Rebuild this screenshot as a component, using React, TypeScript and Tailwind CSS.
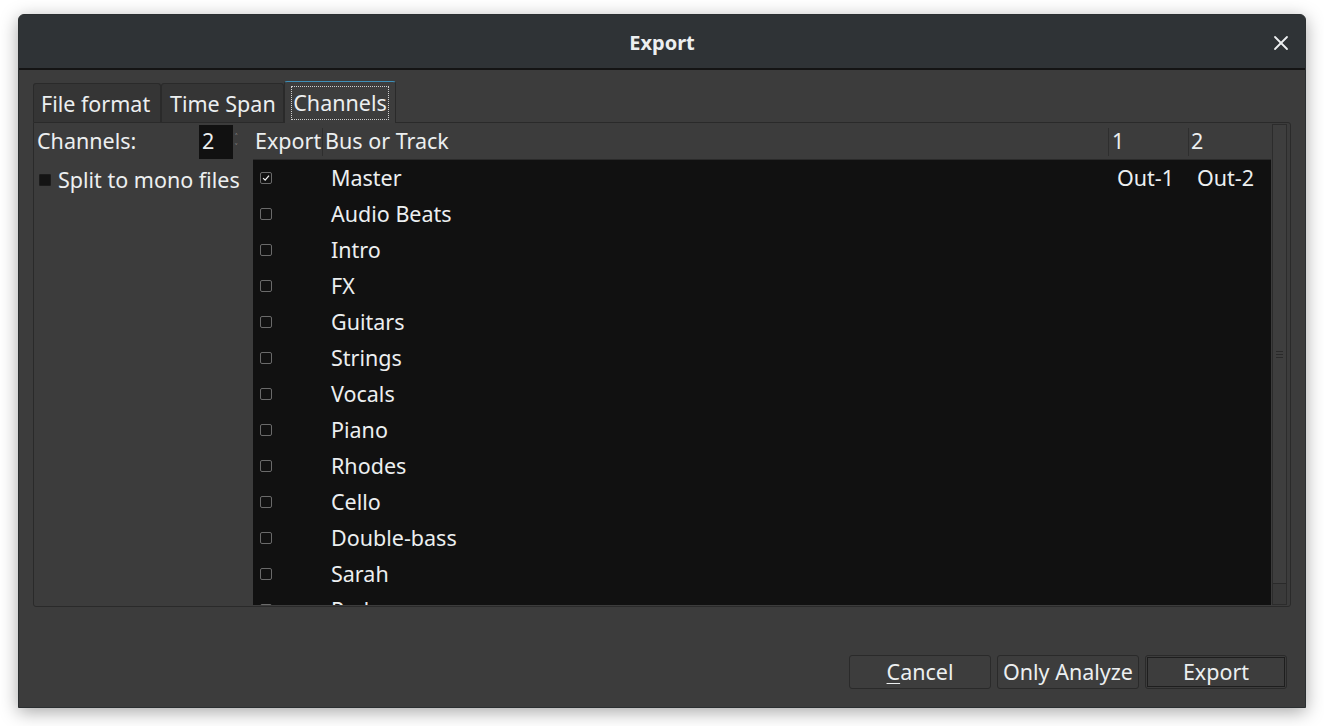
import { X } from "lucide-react";

const tracks = [
  "Master",
  "Audio Beats",
  "Intro",
  "FX",
  "Guitars",
  "Strings",
  "Vocals",
  "Piano",
  "Rhodes",
  "Cello",
  "Double-bass",
  "Sarah",
  "Pads",
];

function RowCheck({ checked }: { checked?: boolean }) {
  return (
    <span className="flex h-[12px] w-[12px] items-center justify-center rounded-[2px] border border-[#6a6a6a]">
      {checked && (
        <svg viewBox="0 0 12 12" className="h-[10px] w-[10px]">
          <path d="M2.5 6.2 L5 8.6 L9.6 3.2" fill="none" stroke="#f0f0f0" strokeWidth="1.5" />
        </svg>
      )}
    </span>
  );
}

export default function App() {
  return (
    <div
      className="h-[726px] w-[1324px] bg-white pl-[18px] pt-[14px] text-[#eceff0]"
      style={{ fontFamily: '"Noto Sans", "DejaVu Sans", sans-serif' }}
    >
      <div className="flex h-[694px] w-[1288px] flex-col overflow-hidden rounded-t-[6px] border border-[#2b2f31] bg-[#3c3c3c] shadow-[0_4px_18px_rgba(0,0,0,0.35)]">
        {/* title bar */}
        <div className="flex h-[55px] shrink-0 items-center border-b-2 border-[#141414] bg-[#2f3336] pt-[2px]">
          <div className="ml-[12px] w-[24px]" />
          <div className="flex-1 text-center text-[20px] font-bold">Export</div>
          <X className="mr-[12px] h-[24px] w-[24px]" strokeWidth={1.8} />
        </div>

        {/* body */}
        <div className="flex flex-1 flex-col px-[14px] pt-[12px]">
          {/* tabs */}
          <div className="flex h-[40px] items-end text-[21.5px]">
            <div className="flex h-[39px] w-[128px] items-center rounded-t-[3px] border border-b-0 border-[#2a2a2a] bg-[#353535] pl-[7px] pt-[3px]">
              File format
            </div>
            <div className="flex h-[39px] w-[123px] items-center rounded-t-[3px] border border-b-0 border-[#2a2a2a] bg-[#353535] pl-[8px] pt-[3px]">
              Time Span
            </div>
            <div className="relative z-10 -mb-px flex h-[42px] w-[112px] items-center justify-center rounded-t-[3px] border border-b-0 border-[#2a2a2a] border-t-[#3e8fb8] bg-[#3d3d3d]">
              <span className="flex h-[34px] items-center border border-dotted border-[#cfcfcf] px-px pt-[2px]">
                Channels
              </span>
            </div>
          </div>

          {/* tab panel */}
          <div className="flex h-[485px] rounded-[3px] rounded-tl-none border border-[#2a2a2a] bg-[#3c3c3c] py-px text-[21.5px]">
            {/* left options */}
            <div className="flex w-[219px] shrink-0 flex-col overflow-hidden">
              <div className="flex h-[34px] items-center pt-px">
                <span className="w-[165px] shrink-0 pl-[3px]">Channels:</span>
                <span className="flex h-[34px] w-[34px] shrink-0 items-center bg-[#111111] pl-[3px]">2</span>
                <span className="ml-[2px] flex flex-col text-[9px] leading-[10px] text-[#9a9a9a]">
                  <span>˄</span>
                  <span>˅</span>
                </span>
              </div>
              <div className="mt-[4px] flex h-[36px] items-center pl-[5px]">
                <span className="h-[12px] w-[12px] shrink-0 rounded-[1px] border border-[#1c1c1c] bg-[#141414]" />
                <span className="ml-[7px] whitespace-nowrap pt-px">Split to mono files</span>
              </div>
            </div>

            {/* table */}
            <div className="flex min-w-0 flex-1 flex-col overflow-hidden">
              <div className="flex h-[36px] shrink-0 items-center border-b border-[#2b2b2b] bg-[#3c3c3c]">
                <div className="flex h-[28px] w-[70px] items-center border-r border-[#2e2e2e] pl-[2px]">Export</div>
                <div className="flex h-[28px] flex-1 items-center border-r border-[#2e2e2e] pl-[2px]">Bus or Track</div>
                <div className="flex h-[28px] w-[80px] items-center border-r border-[#2e2e2e] pl-[3px]">1</div>
                <div className="flex h-[28px] w-[82px] items-center pl-[2px]">2</div>
              </div>
              <div className="flex-1 overflow-hidden bg-[#111111]">
                {tracks.map((t, i) => (
                  <div key={t} className="flex h-[36px] items-center">
                    <div className="flex w-[70px] items-center pl-[7px]">
                      <RowCheck checked={i === 0} />
                    </div>
                    <div className="flex-1 pl-[8px] pt-px">{t}</div>
                    <div className="w-[80px] pl-[8px] pt-px">{i === 0 ? "Out-1" : ""}</div>
                    <div className="w-[82px] pl-[8px] pt-px">{i === 0 ? "Out-2" : ""}</div>
                  </div>
                ))}
              </div>
            </div>

            {/* scrollbar */}
            <div className="ml-px mr-[3px] flex w-[15px] shrink-0 flex-col border border-[#2c2c2c] bg-[#3a3a3a]">
              <div className="flex flex-1 items-center justify-center border-b border-[#2a2a2a] bg-[#3e3e3e]">
                <div className="flex flex-col gap-[2px]">
                  <span className="h-px w-[7px] bg-[#2a2a2a]" />
                  <span className="h-px w-[7px] bg-[#2a2a2a]" />
                  <span className="h-px w-[7px] bg-[#2a2a2a]" />
                </div>
              </div>
              <div className="h-[20px]" />
            </div>
          </div>

          {/* buttons */}
          <div className="mt-[48px] flex justify-end gap-[6px] pr-[4px] text-[21.5px]">
            <button className="h-[34px] w-[142px] rounded-[3px] border border-[#2a2a2a] bg-[#3d3d3d]">
              <span className="underline decoration-1 underline-offset-[3px]">C</span>ancel
            </button>
            <button className="h-[34px] w-[142px] rounded-[3px] border border-[#2a2a2a] bg-[#3d3d3d]">
              Only Analyze
            </button>
            <button className="h-[34px] w-[142px] rounded-[3px] border border-[#2a2a2a] bg-[#3d3d3d] p-px">
              <span className="flex h-full w-full items-center justify-center border border-[#1e1e1e]">Export</span>
            </button>
          </div>
        </div>
      </div>
    </div>
  );
}
